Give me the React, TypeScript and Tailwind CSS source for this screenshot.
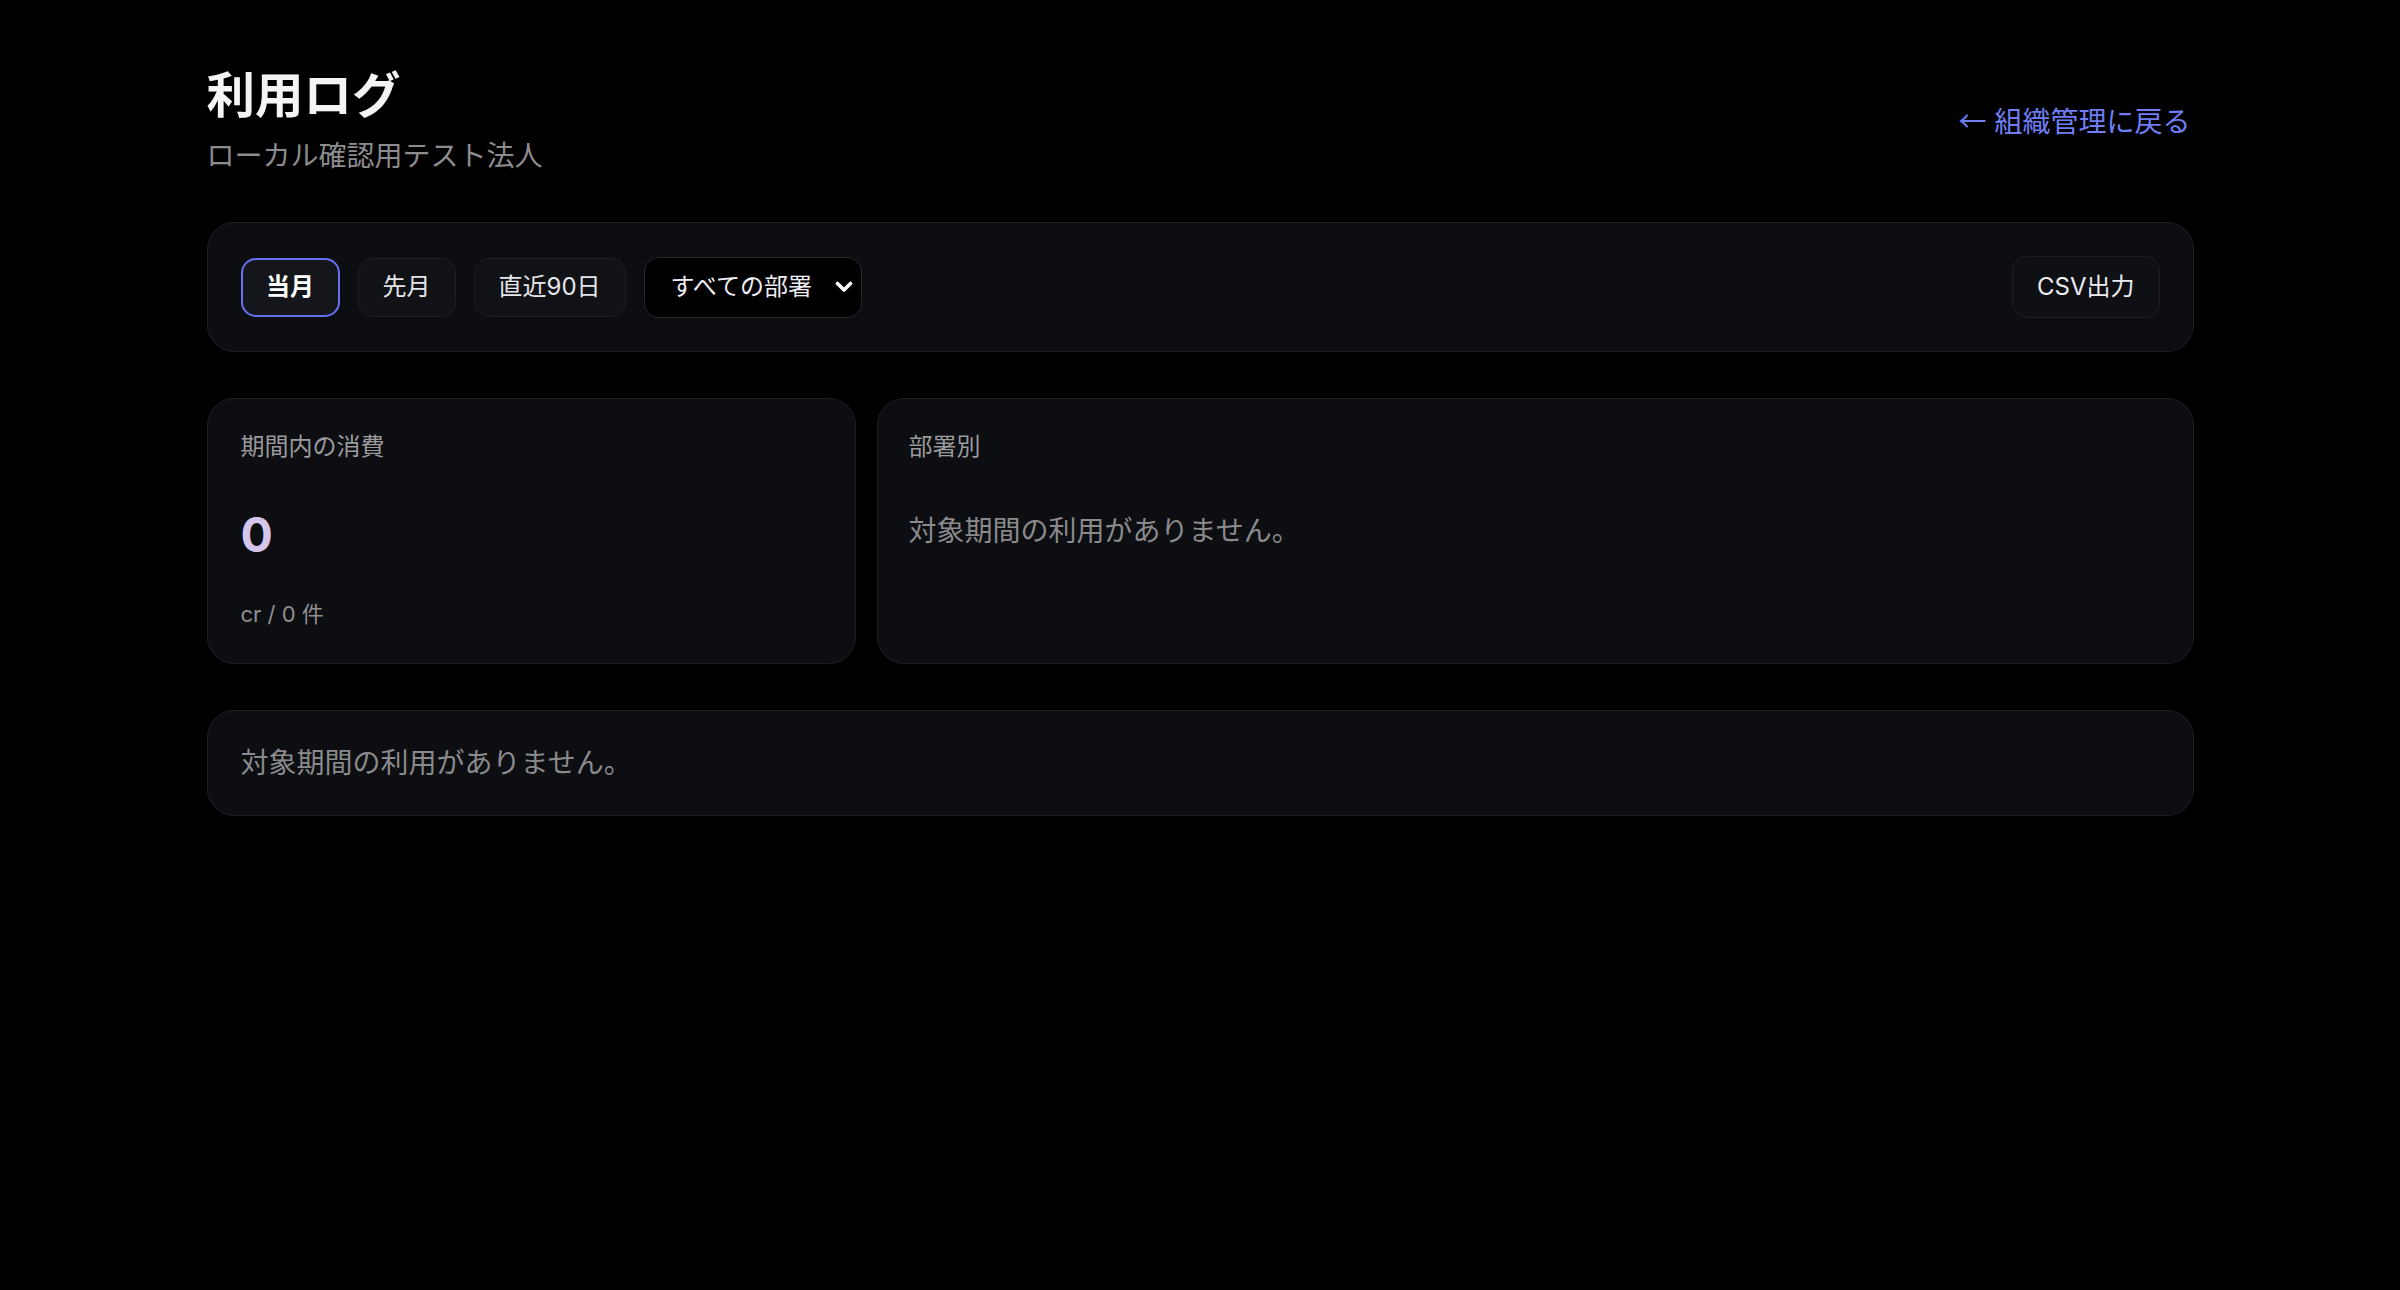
import React from "react";

const FONT = 'Inter, "Noto Sans CJK JP", "Noto Sans", sans-serif';

function Chevron() {
  return (
    <svg width="18" height="12" viewBox="0 0 18 12" fill="none" className="shrink-0">
      <path d="M2.5 2.5 L9 9 L15.5 2.5" stroke="#ffffff" strokeWidth="3.6" strokeLinecap="round" strokeLinejoin="round" />
    </svg>
  );
}

export default function App() {
  return (
    <div className="min-h-screen w-full bg-black text-[#e8e8ea]" style={{ fontFamily: FONT }}>
      <div className="mx-auto w-[1987px] pt-[66px] pb-[80px]">
        {/* Header */}
        <div className="flex items-center justify-between">
          <div className="flex flex-col">
            <h1 className="text-[48.5px] font-bold leading-[60px] text-[#f4f4f5]">利用ログ</h1>
            <p className="mt-[10px] text-[28px] leading-[40px] text-[#8c8c8f]">ローカル確認用テスト法人</p>
          </div>
          <a className="mr-[3px] text-[28px] leading-[40px] text-[#6f7ef4]">
            <span style={{ fontFamily: '"Noto Sans CJK JP", sans-serif' }}>←</span> 組織管理に戻る
          </a>
        </div>

        {/* Filter panel */}
        <div className="mt-[46px] flex items-center justify-between rounded-[27px] border border-[#1d1e23] bg-[#0d0e11] px-[33px] py-[33px]">
          <div className="flex items-center gap-[18px]">
            <button className="h-[59px] rounded-[15px] border-2 border-[#6571f2] bg-[#15161b] px-[23.5px] text-[24px] font-semibold text-white">
              当月
            </button>
            <button className="h-[59px] rounded-[15px] border border-[#1e1f25] bg-[#111216] px-[24px] text-[24px] text-[#e6e6ea]">
              先月
            </button>
            <button className="h-[59px] rounded-[15px] border border-[#1e1f25] bg-[#111216] px-[24px] text-[24px] text-[#e6e6ea]">
              直近90日
            </button>
            <div className="flex h-[61px] w-[218px] items-center justify-between rounded-[15px] border border-[#26272d] bg-black pl-[26px] pr-[8px] text-[24px] text-[#f0eef5]">
              <span>すべての部署</span>
              <Chevron />
            </div>
          </div>
          <button className="h-[62px] rounded-[15px] border border-[#1e1f25] bg-[#0f1013] px-[24px] text-[24px] text-[#ecebf2]">
            CSV出力
          </button>
        </div>

        {/* Cards */}
        <div className="mt-[46px] grid grid-cols-[649px_1fr] gap-[21px]">
          <div className="flex flex-col rounded-[27px] border border-[#1d1e23] bg-[#0d0e11] p-[33px]">
            <div className="text-[24px] leading-[30px] text-[#9a9a9d]">期間内の消費</div>
            <div className="mt-[43px] text-[48px] font-bold leading-[60px] text-[#d4c5ea]">0</div>
            <div className="mt-[33px] text-[22px] leading-[32px] text-[#8f8f92]">cr / 0 件</div>
          </div>
          <div className="flex flex-col rounded-[27px] border border-[#1d1e23] bg-[#0d0e11] p-[33px] pl-[31px]">
            <div className="text-[24px] leading-[30px] text-[#9a9a9d]">部署別</div>
            <div className="mt-[49px] text-[28px] leading-[40px] text-[#8a8a8d]">対象期間の利用がありません。</div>
          </div>
        </div>

        <div className="mt-[46px] rounded-[27px] border border-[#1d1e23] bg-[#0d0e11] p-[33px]">
          <div className="text-[28px] leading-[38px] text-[#8a8a8d]">対象期間の利用がありません。</div>
        </div>
      </div>
    </div>
  );
}
